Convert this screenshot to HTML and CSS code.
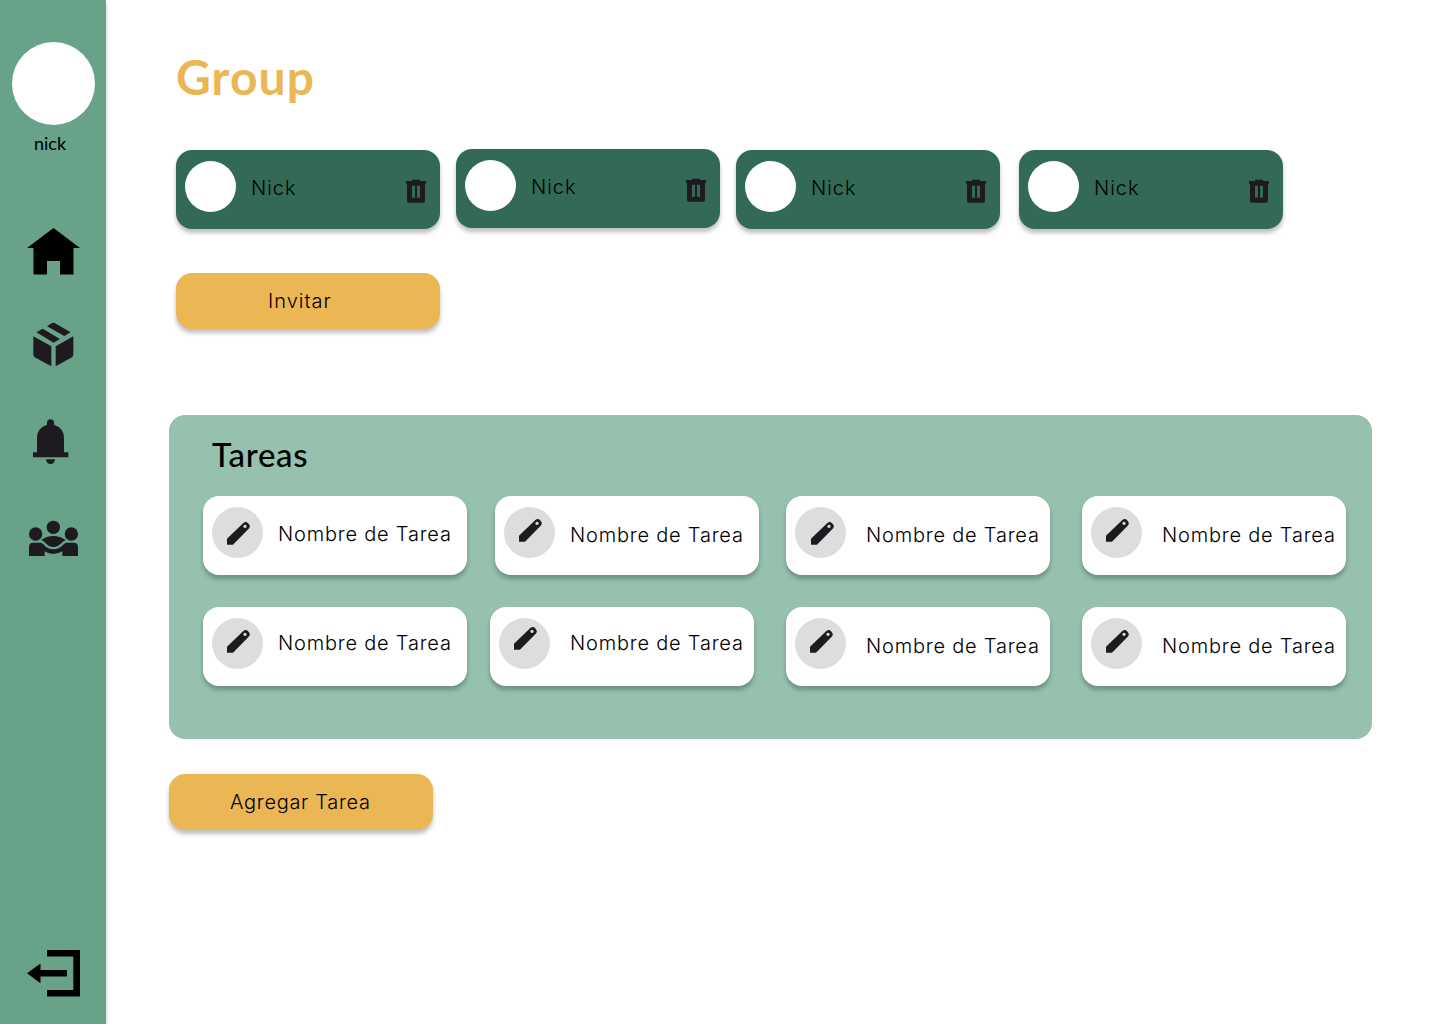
FILE: index.html
```html
<!DOCTYPE html>
<html lang="es">
<head>
<meta charset="utf-8">
<title>Group</title>
<link rel="stylesheet" href="styles.css">
</head>
<body>
<svg class="defs" width="0" height="0" aria-hidden="true">
  <symbol id="trash" viewBox="0 0 60 69"><path fill-rule="evenodd" d="M0 3H18V-1H42V3H60V11H57V62Q57 68 51 68H9Q3 68 3 62V11H0ZM18 17V53H27V17ZM33 17V53H42V17Z"/></symbol>
  <symbol id="pencil" viewBox="0 0 69 69"><path fill-rule="evenodd" d="M0 68V50L49 3Q56 -3 63 3L65 6Q72 13 65 20L18 68ZM54 8A5 5 0 1 0 54.1 18A5 5 0 1 0 54 8Z"/></symbol>
</svg>
<div class="app">
  <nav class="sidebar">
    <div class="profile"></div>
    <span class="profile-name">nick</span>
    <svg class="nav-icon home" viewBox="0 0 54 47"><path d="M27.5 0 54 20H47.5V46.5H34V33H21V46.5H7.5V20H1Z"/></svg>
    <svg class="nav-icon box" viewBox="78 319 162 135"><path d="M141 332 155 323Q160 320 165 323L212 350 193 361ZM109 350 128 339 180 370 161 381ZM100 362 154 392V452L104 425Q100 422 100 416ZM220 362 167 392V452L216 425Q220 422 220 416Z"/></svg>
    <svg class="nav-icon bell" viewBox="78 41 162 135"><path d="M99 141H111V98Q111 68 141 58V52A10.500 10.500 0 0 1 162 52V58Q192 68 192 98V141H205V156H99ZM138 162H165A13.500 14 0 0 1 138 162Z"/></svg>
    <svg class="nav-icon people" viewBox="78 345 162 108"><circle cx="107" cy="387" r="20"/><circle cx="160" cy="367" r="20"/><circle cx="214" cy="387" r="20"/><path d="M124 405Q140 393 160 393T197 405Q190 407 184 415Q174 426 160 426T137 415Q132 407 124 405ZM87 453V426Q87 413 100 413H121Q128 413 133 421Q143 433 160 433T188 421Q193 413 200 413H221Q234 413 234 426V453H187V439Q175 447 160 447T134 439V453Z"/></svg>
    <svg class="nav-icon exit" viewBox="0 0 54 47"><path d="M1 23.300 14.500 13.500V20H41V26.600H14.500V33.300ZM21 0H54V46.500H21V40H47.300V6.600H21Z"/></svg>
  </nav>
  <main class="content">
    <h1 class="title">Group</h1>
    <section class="members">
      <article class="card member"><i class="avatar"></i><span class="label">Nick</span><svg class="trash"><use href="#trash"/></svg></article>
      <article class="card member raised"><i class="avatar"></i><span class="label">Nick</span><svg class="trash"><use href="#trash"/></svg></article>
      <article class="card member"><i class="avatar"></i><span class="label">Nick</span><svg class="trash"><use href="#trash"/></svg></article>
      <article class="card member last"><i class="avatar"></i><span class="label">Nick</span><svg class="trash"><use href="#trash"/></svg></article>
    </section>
    <button class="button invite"><span class="invite-text">Invitar</span></button>
    <section class="panel">
      <h2 class="panel-title">Tareas</h2>
      <div class="tasks">
        <article class="card task"><i class="avatar edit low"><svg class="pencil"><use href="#pencil"/></svg></i><span class="label task-name">Nombre de Tarea</span></article>
        <article class="card task gap-wide"><i class="avatar edit"><svg class="pencil"><use href="#pencil"/></svg></i><span class="label task-name down">Nombre de Tarea</span></article>
        <article class="card task gap-mid"><i class="avatar edit low right"><svg class="pencil"><use href="#pencil"/></svg></i><span class="label task-name down inset">Nombre de Tarea</span></article>
        <article class="card task gap-full"><i class="avatar edit"><svg class="pencil"><use href="#pencil"/></svg></i><span class="label task-name down inset">Nombre de Tarea</span></article>
      </div>
      <div class="tasks">
        <article class="card task"><i class="avatar edit"><svg class="pencil"><use href="#pencil"/></svg></i><span class="label task-name up">Nombre de Tarea</span></article>
        <article class="card task gap-small"><i class="avatar edit high"><svg class="pencil"><use href="#pencil"/></svg></i><span class="label task-name up inset">Nombre de Tarea</span></article>
        <article class="card task gap-full"><i class="avatar edit"><svg class="pencil"><use href="#pencil"/></svg></i><span class="label task-name down inset">Nombre de Tarea</span></article>
        <article class="card task gap-full"><i class="avatar edit"><svg class="pencil"><use href="#pencil"/></svg></i><span class="label task-name down inset">Nombre de Tarea</span></article>
      </div>
    </section>
    <button class="button add"><span class="add-text">Agregar Tarea</span></button>
  </main>
</div>
</body>
</html>
```
FILE: styles.css
```css
* { box-sizing: border-box; }
body { margin: 0; background: #fff; color: #000; font-family: Inter, sans-serif; }
.defs { position: absolute; }
.app { display: flex; width: 1440px; height: 1024px; overflow: hidden; }

.sidebar { width: 106px; height: 1024px; flex: none; display: flex; flex-direction: column; align-items: flex-start; padding-top: 42px; background: #67a289; box-shadow: 0 4px 4px rgba(0,0,0,.25); }
.profile { width: 83px; height: 83px; margin-left: 12px; border-radius: 50%; background: #fff; }
.profile-name { height: 24px; margin: 6px 0 1px 34px; font: 400 18px/24px Lato, sans-serif; }
.nav-icon { display: block; width: 54px; margin-left: 26px; fill: #1d1b20; overflow: visible; }
.home { height: 47px; margin-top: 72px; fill: #000; }
.box { height: 45px; margin-top: 47px; }
.bell { height: 45px; margin-top: 52px; }
.people { height: 36px; margin-top: 56px; }
.exit { height: 47px; margin-top: 394px; fill: #000; }

.content { flex: 1; display: flex; flex-direction: column; align-items: flex-start; padding: 44px 0 0 63px; }
.title { height: 66px; margin: 0 0 0 7px; font: 700 48px/65px Lato, sans-serif; letter-spacing: 1.1px; color: #ebb654; }

.card { width: 264px; height: 79px; flex: none; display: flex; align-items: flex-start; padding: 11px 9px; border-radius: 16px; box-shadow: 0 4px 4px rgba(0,0,0,.25); }
.avatar { width: 51px; height: 51px; flex: none; border-radius: 50%; background: #fff; }
.label { height: 24px; font-size: 20px; font-weight: 300; line-height: 24px; white-space: nowrap; }

.members { display: flex; gap: 16px; margin: 40px 0 0 7px; }
.member { background: #326a57; }
.member .label { width: 154px; margin: 15px 0 0 15px; letter-spacing: 1px; }
.raised { margin-top: -1px; }
.last { margin-left: 3px; }
.trash { width: 20px; height: 23px; margin: 19px 0 0 1px; fill: #1d1b20; overflow: visible; }
.trash use { overflow: visible; }
symbol { overflow: visible; }

.button { display: flex; align-items: flex-start; width: 264px; height: 56px; padding: 16px 0; border: 0; border-radius: 16px; background: #ebb654; box-shadow: 0 4px 4px rgba(0,0,0,.25); font: 300 20px/24px Inter, sans-serif; color: #000; }
.invite { margin: 44px 0 0 7px; }
.invite-text { margin-left: 92px; letter-spacing: 1px; }
.add { margin-top: 35px; }
.add-text { margin-left: 61px; letter-spacing: .7px; }

.panel { width: 1203px; height: 324px; margin-top: 86px; padding: 17px 26px 0 34px; border-radius: 16px; background: #95c1ae; }
.panel-title { height: 44px; margin: 0 0 20px 9px; font: 500 33px/44px Lato, sans-serif; letter-spacing: .7px; }
.tasks { display: flex; margin-bottom: 32px; }
.task { background: #fff; }
.gap-small { margin-left: 23px; }
.gap-mid { margin-left: 27px; }
.gap-wide { margin-left: 28px; }
.gap-full { margin-left: 32px; }
.edit { padding: 12px 0 0 15px; background: #ddd; }
.low { padding-top: 15px; }
.right { padding-left: 16px; }
.high { padding-top: 9px; }
.pencil { display: block; width: 23px; height: 23px; fill: #1d1b20; overflow: visible; }
.task-name { margin: 15px 0 0 15px; letter-spacing: .8px; }
.down { margin-top: 16px; }
.up { margin-top: 13px; }
.inset { margin-left: 20px; }
```
